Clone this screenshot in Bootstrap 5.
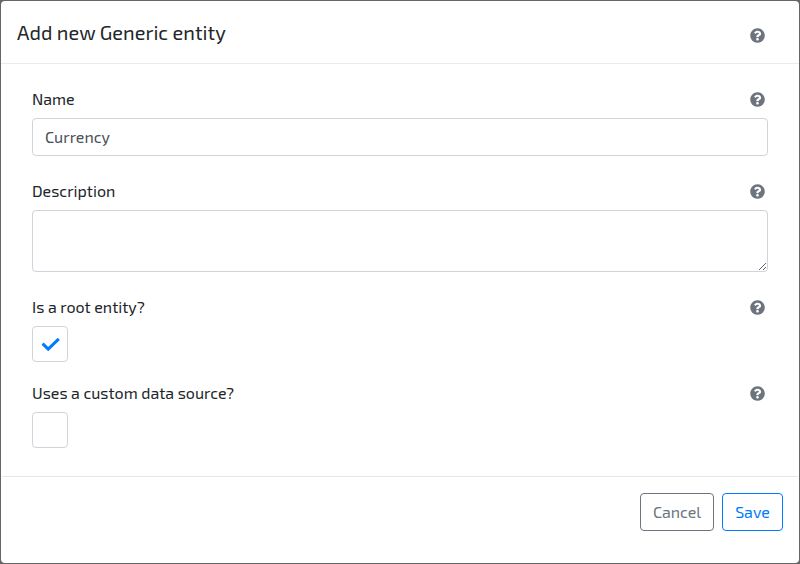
<!DOCTYPE html>
<html lang="en">
<head>
<meta charset="utf-8">
<meta name="viewport" content="width=device-width, initial-scale=1">
<title>Add new Generic entity</title>
<link href="https://cdn.jsdelivr.net/npm/bootstrap@5.3.0/dist/css/bootstrap.min.css" rel="stylesheet">
<style>
body { background: #666; font-family: "Exo 2", "Noto Sans", sans-serif; font-size: 16px; line-height: 24px; color: #212529; overflow: hidden; }
.dialog-frame { height: 564px; padding: 1px; }
.dialog-frame .modal-content { height: 562px; border: 0; border-radius: 4px; background: #fff; }
.dialog-frame .modal-header { height: 63px; padding: 0 34px 0 16px; border-bottom: 1px solid #e9ecef; }
.dialog-frame .modal-title { font-size: 20px; line-height: 30px; font-weight: 400; }
.dialog-frame .modal-header svg { margin-top: 7px; }
.dialog-frame .modal-body { flex: 0 0 412px; padding: 23px 31px 0; }
.field-head { height: 31px; padding: 0 3px 8px 0; }
.field-head .help-icon { margin-top: 2px; }
.dialog-frame .form-control { font-family: inherit; font-size: 16px; line-height: 24px; height: 38px; padding: 5px 12px 7px; border: 1px solid #ced4da; border-radius: 4px; color: #495057; background: #fff; }
.dialog-frame textarea.form-control { height: 62px; min-height: 62px; }
.field-gap { margin-bottom: 23px; }
.check-box { width: 36px; height: 36px; border: 1px solid #ced4da; border-radius: 4px; }
.custom-source { margin-top: 19px; }
.dialog-frame .modal-footer { flex: 1; margin: 0 1px; padding: 16px 15px 0; border-top: 1px solid #e4e6e8; align-items: flex-start; gap: 8px; }
.dialog-frame .modal-footer .btn { height: 38px; margin: 0; padding: 6px 0; font-size: 16px; line-height: 24px; border-radius: 4px; }
.btn-outline-secondary { --bs-btn-color: #6c757d; --bs-btn-border-color: #6c757d; width: 74px; }
.btn-outline-primary { --bs-btn-color: #007bff; --bs-btn-border-color: #007bff; width: 61px; }
.help-icon { width: 15px; height: 15px; fill: #6c757d; flex: none; }
</style>
</head>
<body>
<svg class="d-none" aria-hidden="true">
  <symbol id="help" viewBox="0 0 512 512"><path d="M504 256c0 136.997-111.043 248-248 248S8 392.997 8 256C8 119.083 119.043 8 256 8s248 111.083 248 248zM262.655 90c-54.497 0-89.255 22.957-116.549 63.758-3.536 5.286-2.353 12.415 2.715 16.258l34.699 26.31c5.205 3.947 12.621 3.008 16.665-2.122 17.864-22.658 30.113-35.797 57.303-35.797 20.429 0 45.698 13.148 45.698 32.958 0 14.976-12.363 22.667-32.534 33.976C247.128 238.528 216 254.941 216 296v4c0 6.627 5.373 12 12 12h56c6.627 0 12-5.373 12-12v-1.333c0-28.462 83.186-29.647 83.186-106.667 0-58.002-60.165-102-116.531-102zM256 338c-25.365 0-46 20.635-46 46 0 25.364 20.635 46 46 46s46-20.636 46-46c0-25.365-20.635-46-46-46z"/></symbol>
</svg>
<main class="dialog-frame">
  <div class="modal-content">
    <div class="modal-header d-flex justify-content-between align-items-center">
      <h5 class="modal-title">Add new Generic entity</h5>
      <svg class="help-icon"><use href="#help"/></svg>
    </div>
    <div class="modal-body">
      <div class="field-gap">
        <div class="field-head d-flex justify-content-between align-items-center"><label for="name">Name</label><svg class="help-icon"><use href="#help"/></svg></div>
        <input id="name" class="form-control" type="text" value="Currency">
      </div>
      <div class="field-gap">
        <div class="field-head d-flex justify-content-between align-items-center"><label for="desc">Description</label><svg class="help-icon"><use href="#help"/></svg></div>
        <textarea id="desc" class="form-control"></textarea>
      </div>
      <div>
        <div class="field-head d-flex justify-content-between align-items-center"><span>Is a root entity?</span><svg class="help-icon"><use href="#help"/></svg></div>
        <div class="check-box d-flex align-items-center justify-content-center" role="checkbox" aria-checked="true" aria-label="Is a root entity?">
          <svg width="20" height="16" viewBox="0 0 20 16" fill="none" stroke="#007bff" stroke-width="3"><path d="M2.6 7.6 8.2 13.1 18.8 2.9"/></svg>
        </div>
      </div>
      <div class="custom-source">
        <div class="field-head d-flex justify-content-between align-items-center"><span>Uses a custom data source?</span><svg class="help-icon"><use href="#help"/></svg></div>
        <div class="check-box" role="checkbox" aria-checked="false" aria-label="Uses a custom data source?"></div>
      </div>
    </div>
    <div class="modal-footer d-flex justify-content-end">
      <button type="button" class="btn btn-outline-secondary">Cancel</button>
      <button type="button" class="btn btn-outline-primary">Save</button>
    </div>
  </div>
</main>
<script src="https://cdn.jsdelivr.net/npm/bootstrap@5.3.0/dist/js/bootstrap.bundle.min.js"></script>
</body>
</html>
